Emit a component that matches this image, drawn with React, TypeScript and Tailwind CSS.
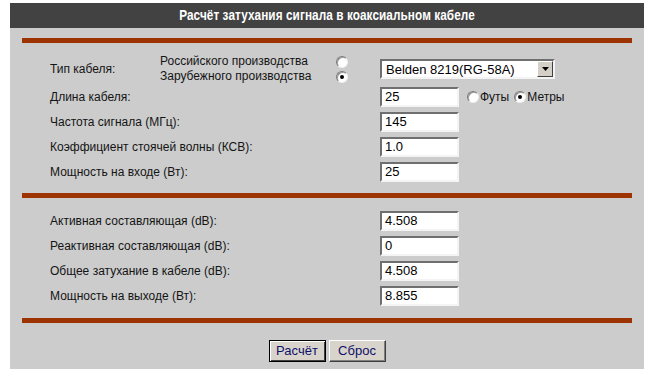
import React from 'react';

const Bar = () => <div className="h-[5px] bg-[#9c3300]" />;

const Field = ({ value }: { value: string }) => (
  <div className="flex h-[20px] w-[79px] items-center border-2 border-t-[#6f6f6f] border-l-[#6f6f6f] border-b-[#f4f4f4] border-r-[#f4f4f4] bg-white pl-[3px] text-[13px] leading-none text-black">
    {value}
  </div>
);

const Radio = ({ checked }: { checked?: boolean }) => (
  <span className="flex h-[12px] w-[12px] items-center justify-center rounded-full border border-t-[#7a7a7a] border-l-[#7a7a7a] border-b-[#f0f0f0] border-r-[#f0f0f0] bg-white shadow-[inset_1px_1px_0_#9a9a9a]">
    {checked && <span className="h-[4px] w-[4px] rounded-full bg-black" />}
  </span>
);

const Row = ({ label, value, extra }: { label: string; value: string; extra?: React.ReactNode }) => (
  <div className="flex h-[25px] items-center">
    <div className="w-[358px] pl-[28px]">{label}</div>
    <Field value={value} />
    {extra}
  </div>
);

const App = () => {
  return (
    <div className="min-h-screen bg-white pt-[3px] font-['Liberation_Sans',Arial,sans-serif] text-[12px] text-[#141414]">
      <div className="ml-[10px] w-[634px] bg-[#cccccc] pb-[8px]">
        {/* Header */}
        <div className="flex h-[25px] items-center justify-center bg-[#424242] text-white">
          <span className="inline-block scale-x-[0.84] text-[14px] font-bold tracking-[0.1px] whitespace-nowrap">
            Расчёт затухания сигнала в коаксиальном кабеле
          </span>
        </div>

        <div className="px-[12px] pt-[10px]">
          <Bar />

          {/* Input section */}
          <div className="pt-[11px] pb-[9px]">
            <div className="flex h-[30px] items-center">
              <div className="w-[138px] pl-[28px]">Тип кабеля:</div>
              <div className="flex w-[176px] flex-col leading-[15px]">
                <span>Российского производства</span>
                <span>Зарубежного производства</span>
              </div>
              <div className="flex w-[44px] flex-col gap-[3px]">
                <Radio />
                <Radio checked />
              </div>
              <div className="flex h-[20px] w-[175px] items-center border-2 border-t-[#6f6f6f] border-l-[#6f6f6f] border-b-[#f4f4f4] border-r-[#f4f4f4] bg-white">
                <span className="flex-1 pl-[4px] text-[13px] leading-none text-black">Belden 8219(RG-58A)</span>
                <span className="flex h-[16px] w-[16px] items-center justify-center border border-t-white border-l-white border-b-[#404040] border-r-[#404040] bg-[#d4d0c8]">
                  <svg width="7" height="4" viewBox="0 0 7 4">
                    <path d="M0 0h7L3.5 4z" fill="#000" />
                  </svg>
                </span>
              </div>
            </div>
            <Row
              label="Длина кабеля:"
              value="25"
              extra={
                <div className="ml-[8px] flex items-center">
                  <Radio />
                  <span className="ml-[1px]">Футы</span>
                  <span className="ml-[5px]"><Radio checked /></span>
                  <span className="ml-[1px]">Метры</span>
                </div>
              }
            />
            <Row label="Частота сигнала (МГц):" value="145" />
            <Row label="Коэффициент стоячей волны (КСВ):" value="1.0" />
            <Row label="Мощность на входе (Вт):" value="25" />
          </div>

          <Bar />

          {/* Results */}
          <div className="pt-[10px] pb-[10px]">
            <Row label="Активная составляющая (dB):" value="4.508" />
            <Row label="Реактивная составляющая (dB):" value="0" />
            <Row label="Общее затухание в кабеле (dB):" value="4.508" />
            <Row label="Мощность на выходе (Вт):" value="8.855" />
          </div>

          <Bar />

          <div className="flex justify-center gap-[3px] pt-[17px]">
            <button className="h-[22px] w-[57px] border border-black bg-[#d8d4cc] text-[13px] text-[#10106a] shadow-[inset_1px_1px_0_#ffffff,inset_-1px_-1px_0_#404040]">
              Расчёт
            </button>
            <button className="h-[22px] w-[57px] border border-t-white border-l-white border-b-[#404040] border-r-[#404040] bg-[#d8d4cc] text-[13px] text-[#10106a] shadow-[inset_-1px_-1px_0_#808080]">
              Сброс
            </button>
          </div>
        </div>
      </div>
    </div>
  );
};

export default App;
